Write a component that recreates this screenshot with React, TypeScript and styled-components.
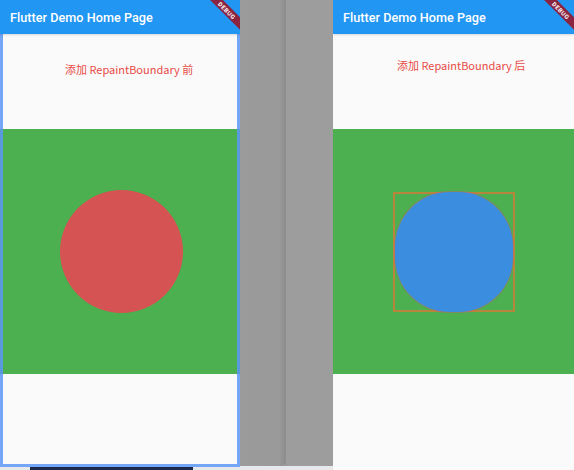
import React from "react";
import styled, { createGlobalStyle } from "styled-components";

const Global = createGlobalStyle`
  html, body { margin: 0; padding: 0; background: #9b9b9b; }
  body { width: 574px; height: 470px; overflow: hidden; font-family: Roboto, "Noto Sans CJK SC", sans-serif; }
`;

const Stage = styled.div`
  display: flex;
  width: 574px;
  height: 470px;
  position: relative;
`;

const Phone = styled.div<{ $w: number; $h: number }>`
  position: relative;
  width: ${(p) => p.$w}px;
  height: ${(p) => p.$h}px;
  flex: none;
  display: flex;
  flex-direction: column;
  background: #fafafa;
  overflow: hidden;
  z-index: 1;
`;

const AppBar = styled.div`
  height: 34px;
  flex: none;
  background: #2196f3;
  box-shadow: 0 1px 2px rgba(0, 0, 0, 0.15);
  display: flex;
  align-items: center;
  padding-left: 10px;
  color: #fff;
  font-weight: 500;
  font-size: 12.6px;
  letter-spacing: 0.05px;
  z-index: 1;
`;

const Caption = styled.div<{ $pad: number; $top: number }>`
  height: 95px;
  flex: none;
  box-sizing: border-box;
  padding-left: ${(p) => p.$pad}px;
  padding-top: ${(p) => p.$top}px;
  color: #e84a45;
  font-size: 11px;
  font-family: "Noto Sans CJK SC", Roboto, sans-serif;
  line-height: 14px;
`;

const Band = styled.div`
  height: 245px;
  flex: none;
  background: #4caf50;
  display: flex;
  align-items: center;
  justify-content: center;
`;

const RedCircle = styled.div`
  width: 123px;
  height: 123px;
  border-radius: 50%;
  background: #d65353;
  margin-left: 3px;
`;

const BoundaryBox = styled.div`
  width: 118px;
  height: 116px;
  border: 2px solid #b7853b;
  display: flex;
  align-items: center;
  justify-content: center;
  margin-left: 1px;
`;

const BlueBlob = styled.div`
  width: 120px;
  height: 120px;
  border-radius: 46%;
  background: #3a8ddf;
  box-shadow: 0 0 0 1px rgba(200, 90, 120, 0.45);
`;

const Selection = styled.div`
  position: absolute;
  left: 0;
  top: 34px;
  right: 0;
  bottom: 0;
  border: 3px solid rgba(90, 150, 245, 0.85);
  border-top: none;
  pointer-events: none;
`;

const Banner = styled.div`
  position: absolute;
  top: 6px;
  right: -22px;
  width: 70px;
  height: 9px;
  background: #8b2440;
  transform: rotate(45deg);
  color: #fff;
  font-size: 6px;
  font-weight: 700;
  line-height: 9px;
  text-align: center;
  z-index: 2;
  letter-spacing: 0.5px;
`;

const Divider = styled.div`
  width: 93px;
  flex: none;
  display: flex;
  height: 466px;
`;

const PanelA = styled.div`
  width: 46px;
  background: linear-gradient(to right, #9b9b9b 0%, #9a9a9a 85%, #8c8c8c 100%);
  border-bottom-right-radius: 5px;
`;

const PanelB = styled.div`
  flex: 1;
  background: #9d9d9d;
  border-bottom-left-radius: 5px;
`;

const BottomStrip = styled.div`
  position: absolute;
  left: 0;
  right: 0;
  bottom: 0;
  height: 4px;
  background: #e6e8ec;
  display: flex;
  padding-left: 30px;
`;

const DarkBar = styled.div`
  width: 163px;
  height: 4px;
  background: #1b2a4a;
`;

export default function App() {
  return (
    <>
      <Global />
      <Stage>
        <Phone $w={240} $h={467}>
          <AppBar>Flutter Demo Home Page</AppBar>
          <Caption $pad={65} $top={28}>添加 RepaintBoundary 前</Caption>
          <Band>
            <RedCircle />
          </Band>
          <Banner>DEBUG</Banner>
          <Selection />
        </Phone>
        <Divider>
          <PanelA />
          <PanelB />
        </Divider>
        <Phone $w={241} $h={470}>
          <AppBar>Flutter Demo Home Page</AppBar>
          <Caption $pad={64} $top={24}>添加 RepaintBoundary 后</Caption>
          <Band>
            <BoundaryBox>
              <BlueBlob />
            </BoundaryBox>
          </Band>
          <Banner>DEBUG</Banner>
        </Phone>
        <BottomStrip>
          <DarkBar />
        </BottomStrip>
      </Stage>
    </>
  );
}
